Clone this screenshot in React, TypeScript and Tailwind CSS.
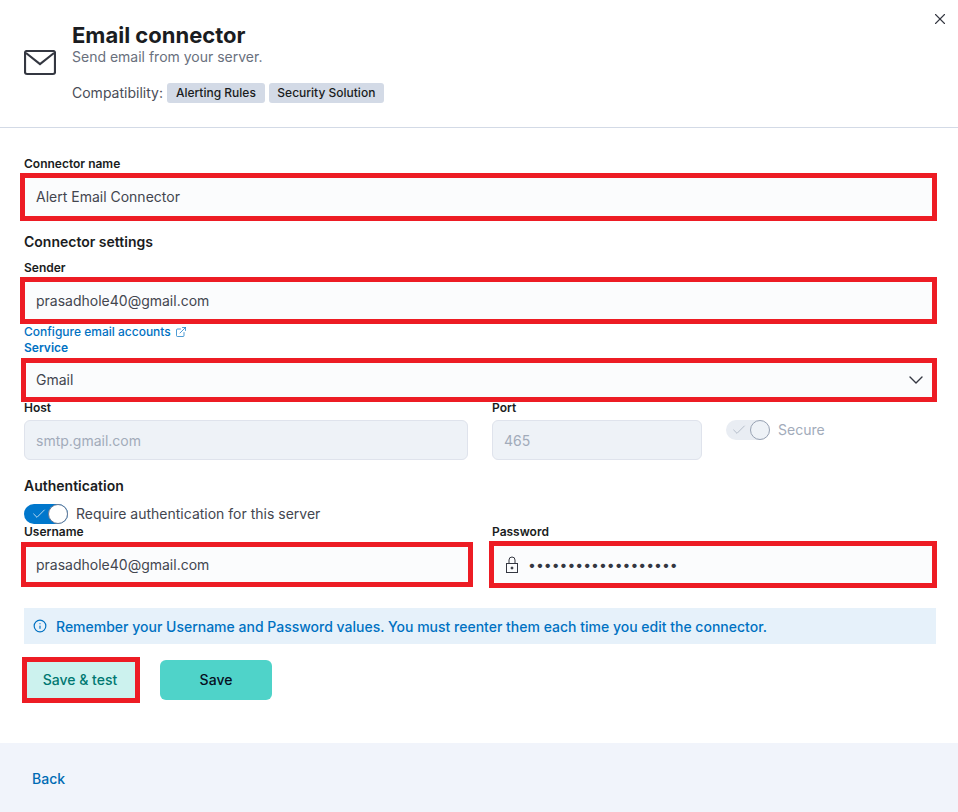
import { ChevronDown, X, ExternalLink, Info, Check } from "lucide-react";

// red annotation frame drawn over a field
function Marked({ children, className }: { children: React.ReactNode; className: string }) {
  return (
    <div className="relative">
      {children}
      <div className={`absolute pointer-events-none border-[5px] border-[#ed1c24] ${className}`} />
    </div>
  );
}

function Label({ children }: { children: React.ReactNode }) {
  return <div className="h-[16px] text-[12px] leading-[16px] font-semibold text-[#1a1c21]">{children}</div>;
}

function Field({ value, tall = 38 }: { value: string; tall?: 34 | 37 | 38 }) {
  const height = tall === 34 ? "h-[34px]" : tall === 37 ? "h-[37px]" : "h-[38px]";
  return (
    <div className={`${height} rounded-[6px] bg-[#fbfcfd] pl-[12px] pb-[1px] flex items-center text-[14px] text-[#43464f]`}>
      {value}
    </div>
  );
}

function Disabled({ value }: { value: string }) {
  return (
    <div className="h-[40px] rounded-[6px] bg-[#eef2f7] border border-[#dfe3ec] pl-[11px] flex items-center text-[14px] text-[#a2abba]">
      {value}
    </div>
  );
}

export default function App() {
  return (
    <div className="relative w-[958px] h-[812px] bg-white font-['Inter',sans-serif] flex flex-col overflow-hidden">
      <button className="absolute top-[10px] right-[9px] text-[#343741]">
        <X className="w-[18px] h-[18px]" strokeWidth={1.5} />
      </button>

      <header className="h-[128px] shrink-0 border-b border-[#d3dae6] pl-[24px] flex">
        <svg className="mt-[50px] w-[32px] h-[26px]" viewBox="0 0 32 26" fill="none" stroke="#343741" strokeWidth="2.2">
          <rect x="1" y="1" width="30" height="23" rx="2" />
          <path d="M2 3 L16 14 L30 3" />
        </svg>
        <div className="ml-[16px] pt-[21px]">
          <h1 className="text-[22px] leading-[28px] font-bold text-[#1a1c21]">Email connector</h1>
          <p className="text-[14px] leading-[16px] text-[#69707d]">Send email from your server.</p>
          <div className="mt-[17px] flex items-center text-[14px] text-[#4a4d57]">
            <span>Compatibility:</span>
            <span className="ml-[4px] h-[20px] px-[9px] rounded-[3px] bg-[#d3dae6] text-[12px] leading-[20px] font-medium text-[#1a1c21]">Alerting Rules</span>
            <span className="ml-[4px] w-[115px] h-[20px] text-center rounded-[3px] bg-[#d3dae6] text-[12px] leading-[20px] font-medium text-[#1a1c21]">Security Solution</span>
          </div>
        </div>
      </header>

      <main className="flex-1 px-[24px] pt-[28px] w-full">
        <Label>Connector name</Label>
        <Marked className="-left-[4px] -right-[3px] -top-[5px] -bottom-[5px]">
          <div className="mt-[6px]"><Field value="Alert Email Connector" /></div>
        </Marked>

        <h2 className="mt-[16px] h-[20px] text-[14px] leading-[20px] font-semibold text-[#1a1c21]">Connector settings</h2>
        <div className="mt-[8px]"><Label>Sender</Label></div>
        <Marked className="-left-[4px] -right-[3px] -top-[5px] -bottom-[4px]">
          <div className="mt-[6px]"><Field value="prasadhole40@gmail.com" /></div>
        </Marked>

        <a className="mt-[4px] flex items-center h-[16px] text-[12px] font-medium text-[#0071c2]">
          Configure email accounts
          <ExternalLink className="ml-[4px] w-[12px] h-[12px]" strokeWidth={1.4} />
        </a>
        <div className="h-[16px] text-[12px] leading-[16px] font-semibold text-[#0071c2]">Service</div>
        <Marked className="-left-[3px] -right-[3px] -top-[5px] -bottom-[5px]">
          <div className="mt-[7px] relative">
            <Field value="Gmail" tall={34} />
            <ChevronDown className="absolute right-[6px] top-[5px] w-[24px] h-[24px] text-[#343741]" strokeWidth={1.4} />
          </div>
        </Marked>

        <div className="mt-[3px] flex">
          <div className="w-[444px] mr-[24px]">
            <Label>Host</Label>
            <div className="mt-[4px]"><Disabled value="smtp.gmail.com" /></div>
          </div>
          <div className="w-[210px] mr-[24px]">
            <Label>Port</Label>
            <div className="mt-[4px]"><Disabled value="465" /></div>
          </div>
          <div className="pt-[20px] flex items-start">
            <div className="w-[44px] h-[20px] rounded-full bg-[#e9edf3] relative">
              <Check className="absolute left-[5px] top-[2px] w-[16px] h-[16px] text-[#a2abba]" strokeWidth={1.1} />
              <div className="absolute right-0 top-0 w-[20px] h-[20px] rounded-full bg-[#eef2f7] border border-[#98a2b3]" />
            </div>
            <span className="ml-[8px] text-[14px] leading-[20px] text-[#a2abba]">Secure</span>
          </div>
        </div>

        <h2 className="mt-[16px] h-[20px] text-[14px] leading-[20px] font-semibold text-[#1a1c21]">Authentication</h2>
        <div className="mt-[8px] flex items-center">
          <div className="w-[44px] h-[20px] rounded-full bg-[#0077cc] relative">
            <Check className="absolute left-[7px] top-[2px] w-[16px] h-[16px] text-white" strokeWidth={1.1} />
            <div className="absolute right-0 top-0 w-[20px] h-[20px] rounded-full bg-white border border-[#6a7a94]" />
          </div>
          <span className="ml-[8px] text-[14px] leading-[20px] text-[#43464f]">Require authentication for this server</span>
        </div>

        <div className="flex">
          <div className="w-[444px] mr-[24px]">
            <Label>Username</Label>
            <Marked className="-left-[3px] -right-[5px] -top-[4px] -bottom-[4px]">
              <div className="mt-[6px]"><Field value="prasadhole40@gmail.com" tall={37} /></div>
            </Marked>
          </div>
          <div className="flex-1">
            <Label>Password</Label>
            <Marked className="-left-[3px] -right-[3px] -top-[5px] -bottom-[5px]">
              <div className="mt-[6px] h-[37px] rounded-[6px] bg-[#fbfcfd] pl-[12px] flex items-center">
                <svg className="w-[16px] h-[17px]" viewBox="0 0 16 17" fill="none" stroke="#343741">
                  <rect x="2.5" y="7.5" width="11" height="9" />
                  <path d="M5 7.5V4a3 3 0 0 1 6 0v3.5" />
                  <circle cx="8" cy="12" r="1" fill="#343741" />
                </svg>
                <span className="ml-[8px] text-[14px] text-[#343741]">•••••••••••••••••••</span>
              </div>
            </Marked>
          </div>
        </div>

        <div className="mt-[25px] -mr-[2px] h-[36px] bg-[#e6f1fa] pl-[9px] flex items-center text-[14px] font-medium text-[#0071c2]">
          <Info className="w-[14px] h-[14px]" strokeWidth={2} />
          <span className="ml-[9px]">Remember your Username and Password values. You must reenter them each time you edit the connector.</span>
        </div>

        <div className="mt-[16px] flex">
          <Marked className="-left-[2px] -right-[4px] -top-[3px] -bottom-[3px]">
            <button className="block w-[112px] h-[40px] pb-[1px] bg-[#ccf2ee] text-[14px] font-medium text-[#007871]">Save &amp; test</button>
          </Marked>
          <button className="ml-[24px] w-[112px] h-[40px] pb-[1px] rounded-[6px] bg-[#4fd3c9] text-[14px] font-medium text-[#07101f]">Save</button>
        </div>
      </main>

      <footer className="h-[69px] shrink-0 bg-[#f1f4fb] pl-[32px] pt-[2px] flex items-center">
        <a className="text-[14px] font-medium text-[#006bb4]">Back</a>
      </footer>
    </div>
  );
}
